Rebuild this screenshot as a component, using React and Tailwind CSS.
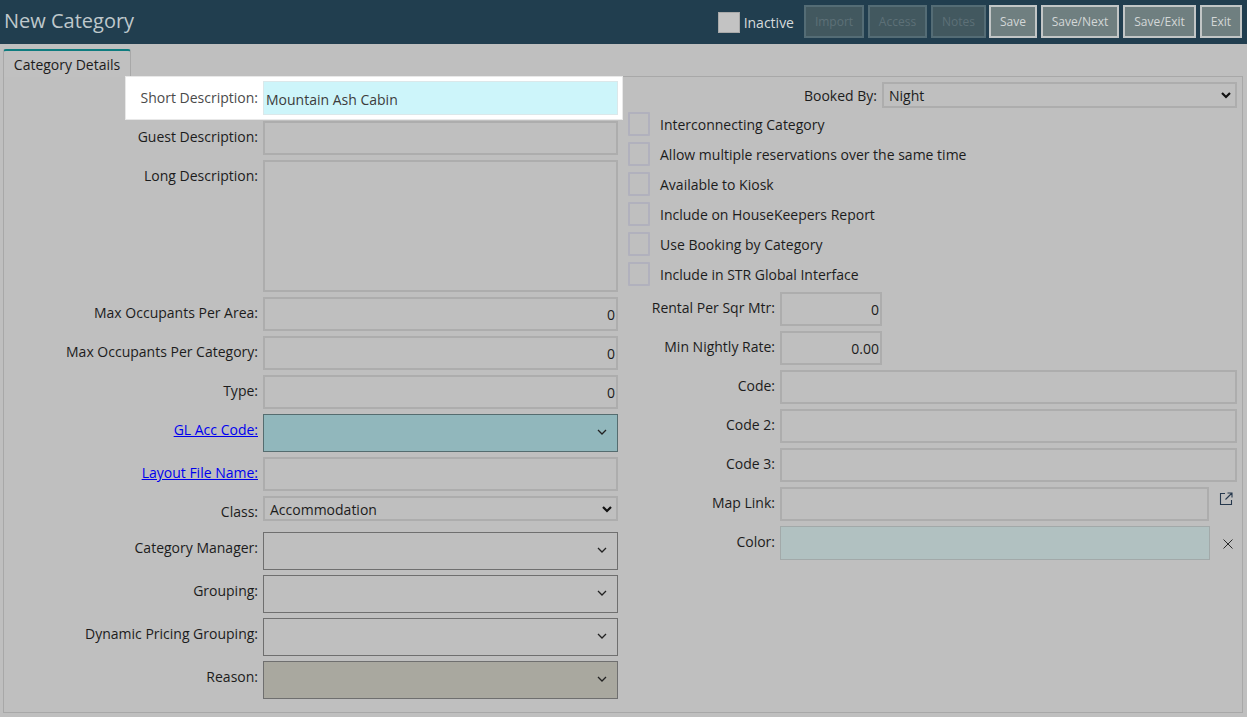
import React from "react";

const Chevron = () => (
  <svg width="12" height="12" viewBox="0 0 12 12" fill="none" stroke="#222" strokeWidth="1.3" className="shrink-0 -mt-[2px]">
    <path d="M2 4l4 4 4-4" />
  </svg>
);

const Label = ({ text, link, w = "w-[254px]", className = "" }) => (
  <div className={`${w} shrink-0 text-right leading-[19px] pt-[6px] ${className}`}>
    {link ? <a className="text-[#0000ee] underline">{text}</a> : text}
  </div>
);

const Input = ({ value, right, className = "w-[355px]", h = "h-[34px]" }) => (
  <div
    className={`${className} ${h} border-2 border-[#adadad] flex items-center px-[8px] leading-[19px] ${
      right ? "justify-end pr-[1px]" : ""
    }`}
  >
    {value}
  </div>
);

const Row = ({ label, link, children, className = "mb-[5px]" }) => (
  <div className={`flex gap-[5px] ${className}`}>
    <Label text={label} link={link} />
    {children}
  </div>
);

const Combo = ({ bg = "", border = "border-[#6f6f6f]" }) => (
  <div className={`w-[355px] h-[38px] border ${border} ${bg} flex items-center justify-end pr-[9px]`}>
    <Chevron />
  </div>
);

const NativeSelect = ({ text, className, h }) => (
  <div className={`${className} ${h} border-2 border-[#adadad] flex items-center justify-between pl-[5px] pr-[3px] leading-[19px]`}>
    <span className="pt-[1px]">{text}</span>
    <svg width="12" height="12" viewBox="0 0 12 12" fill="none" stroke="#111" strokeWidth="2.2">
      <path d="M2 4l4 4 4-4" />
    </svg>
  </div>
);

const Check = ({ label }) => (
  <div className="flex items-center h-[30px]">
    <div className="w-[22px] h-[24px] border-2 border-[#b1b1bd] rounded-[1px]" />
    <span className="ml-[10px]">{label}</span>
  </div>
);

const HeadButton = ({ text, w, off, className = "" }) => (
  <button
    className={`${w} ${className} h-[33px] border-[2px] text-[12px] leading-none ${
      off
        ? "border-[#546c75] bg-[#42585f] text-[#5d7077]"
        : "border-[#c2c6c6] bg-[#6f7f80] text-[#d3d7d7]"
    }`}
  >
    {text}
  </button>
);

export default function App() {
  return (
    <div
      className="w-[1247px] h-[717px] overflow-hidden bg-[#bfbfbf] text-[14px] text-[#1c1c1c]"
      style={{ fontFamily: '"Open Sans", sans-serif' }}
    >
      {/* Barra superior */}
      <div className="h-[44px] bg-[#213e4f] flex items-center pl-[4px] pr-[5px]">
        <h1 className="text-[20px] text-[#bfc8cc] leading-none -mt-[3px]">New Category</h1>
        <div className="ml-auto flex items-center">
          <div className="w-[22px] h-[21px] bg-[#c3c3c3] border border-[#a9a9a9]" />
          <span className="ml-[4px] mr-[10px] text-[#d6dadc]">Inactive</span>
          <div className="flex gap-[4px] -mt-[1px]">
            <HeadButton text="Import" w="w-[60px]" off />
            <HeadButton text="Access" w="w-[59px]" off />
            <HeadButton text="Notes" w="w-[55px]" off />
            <HeadButton text="Save" w="w-[48px]" className="-ml-[1px]" />
            <HeadButton text="Save/Next" w="w-[78px]" />
            <HeadButton text="Save/Exit" w="w-[73px]" />
            <HeadButton text="Exit" w="w-[42px]" />
          </div>
        </div>
      </div>

      {/* Pestaña */}
      <div className="h-[32px] pt-[5px] pl-[3px]">
        <div className="w-[128px] h-[28px] bg-[#c0c0c0] border border-b-0 border-[#a8a8a8] border-t-[2px] border-t-[#0e7c7f] rounded-t-[3px] text-center leading-[27px] relative z-10">
          Category Details
        </div>
      </div>

      {/* Panel */}
      <div className="ml-[3px] w-[1240px] h-[637px] border border-[#a8a8a8] flex">
        <div className="w-[615px] shrink-0">
          <div className="relative z-20 flex ml-[121px] -mt-[1px] mb-[1px] h-[44px] w-[498px] bg-white border border-[#e8e8e8] pt-[4px] pl-[3px]">
            <div className="w-[129px] shrink-0 text-right pt-[7px] leading-[19px] text-[#4a4a4a]">Short Description:</div>
            <div className="ml-[5px] w-[355px] h-[34px] bg-[#cdf5fa] border border-[#dbe8ea] flex items-center pl-[2px] pt-[3px] text-[#3c3c3c]">
              Mountain Ash Cabin
            </div>
          </div>
          <Row label="Guest Description:"><Input /></Row>
          <Row label="Long Description:"><Input h="h-[132px]" /></Row>
          <Row label="Max Occupants Per Area:"><Input value="0" right /></Row>
          <Row label="Max Occupants Per Category:"><Input value="0" right /></Row>
          <Row label="Type:"><Input value="0" right /></Row>
          <Row label="GL Acc Code:" link><Combo bg="bg-[#91b7bc]" border="border-[#556c6f]" /></Row>
          <Row label="Layout File Name:" link><Input /></Row>
          <Row label="Class:" className="mb-[11px]">
            <NativeSelect text="Accommodation" className="w-[355px]" h="h-[25px]" />
          </Row>
          <Row label="Category Manager:"><Combo /></Row>
          <Row label="Grouping:"><Combo /></Row>
          <Row label="Dynamic Pricing Grouping:"><Combo /></Row>
          <Row label="Reason:"><Combo bg="bg-[#a9a89f]" /></Row>
        </div>

        <div className="ml-[9px] w-[609px] shrink-0 pt-[5px]">
          <div className="flex justify-end items-center gap-[5px] h-[26px]">
            <span>Booked By:</span>
            <NativeSelect text="Night" className="w-[355px]" h="h-[26px]" />
          </div>
          <div className="pt-[1px] mb-[3px]">
            <Check label="Interconnecting Category" />
            <Check label="Allow multiple reservations over the same time" />
            <Check label="Available to Kiosk" />
            <Check label="Include on HouseKeepers Report" />
            <Check label="Use Booking by Category" />
            <Check label="Include in STR Global Interface" />
          </div>
          <div className="flex flex-col gap-[5px]">
            <RightRow label="Rental Per Sqr Mtr:"><Input value="0" right className="w-[102px]" /></RightRow>
            <RightRow label="Min Nightly Rate:"><Input value="0.00" right className="w-[102px]" /></RightRow>
            <RightRow label="Code:"><Input className="w-[457px]" /></RightRow>
            <RightRow label="Code 2:"><Input className="w-[457px]" /></RightRow>
            <RightRow label="Code 3:"><Input className="w-[457px]" /></RightRow>
            <RightRow label="Map Link:">
              <Input className="w-[429px]" />
              <svg width="14" height="14" viewBox="0 0 14 14" fill="none" stroke="#26384d" strokeWidth="1.1" className="ml-[10px] mt-[5px]">
                <path d="M6 1.500H1.500v11h11V8M8.500 1h4.500v4.500M13 1L6.500 7.500" />
              </svg>
            </RightRow>
            <RightRow label="Color:">
              <div className="w-[430px] h-[34px] bg-[#b1c1c1] border border-[#a2a9a9]" />
              <svg width="12" height="12" viewBox="0 0 12 12" fill="none" stroke="#2a2a2a" strokeWidth="1" className="ml-[12px] mt-[12px]">
                <path d="M1.500 1.500l9 9M10.500 1.500l-9 9" />
              </svg>
            </RightRow>
          </div>
        </div>
      </div>
    </div>
  );
}

function RightRow({ label, children }) {
  return (
    <div className="flex">
      <div className="w-[147px] shrink-0 text-right pt-[6px] leading-[19px]">{label}</div>
      <div className="ml-[5px] flex items-start">{children}</div>
    </div>
  );
}
